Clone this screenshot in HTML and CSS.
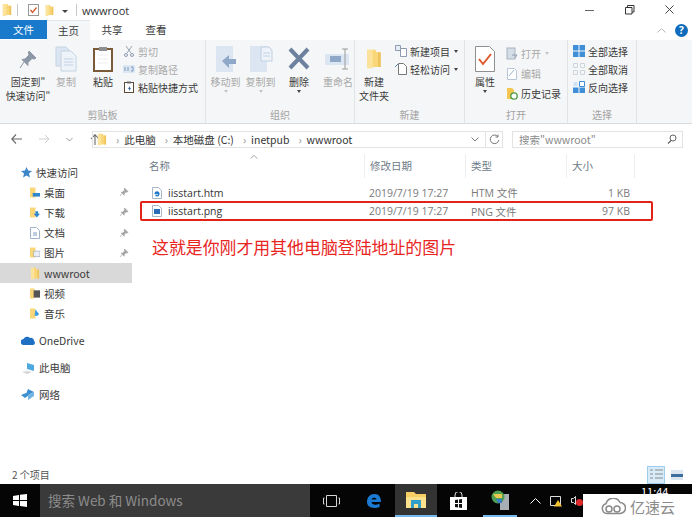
FILE: index.html
```html
<!DOCTYPE html>
<html lang="zh">
<head>
    <meta charset="UTF-8" />
    <title>wwwroot</title>
    <link rel="stylesheet" href="styles.css">
</head>
<body>
    <svg class="defs" width="0" height="0">
        <symbol id="folder" viewBox="0 0 12 16">
            <path d="M1 1h6l1 2h3v11H5l-4 1z" fill="#f9d778"/>
            <path d="M1 1h4v14H1z" fill="#fbe39c"/>
            <path d="M9 3h2v11H9z" fill="#eec25c"/>
        </symbol>
        <symbol id="pin" viewBox="0 0 10 10">
            <path d="M5.5 1L9 4.500l-1 .6-1-.3-1.800 1.800-.1 1.600-3-3 1.600-.1 1.800-1.800-.2-1z M3 6.500L1 9" fill="#a3a3a3" stroke="#a3a3a3" stroke-width=".7"/>
        </symbol>
    </svg>

    <div class="titlebar">
        <svg class="ico" width="10" height="14"><use href="#folder"/></svg>
        <span class="tsep tsep-a"></span>
        <svg class="qa-check" width="11" height="12" viewBox="0 0 11 12"><rect x=".5" y=".5" width="10" height="11" fill="#fff" stroke="#9a9a9a"/><path d="M2.5 6l2 2.500 4-5" fill="none" stroke="#d9572c" stroke-width="1.300"/></svg>
        <svg class="qa-folder" width="9" height="13"><use href="#folder"/></svg>
        <span class="qa-drop"></span>
        <span class="tsep tsep-b"></span>
        <span class="title">wwwroot</span>
        <div class="winbtns">
            <svg width="10" height="10" viewBox="0 0 10 10"><path d="M0 5.500h9" stroke="#666"/></svg>
            <svg width="10" height="10" viewBox="0 0 10 10"><path d="M.5 2.500H7V9H.5zM2.500 2.500V.5H9V7H7" fill="none" stroke="#333"/></svg>
            <svg width="10" height="10" viewBox="0 0 10 10"><path d="M.5.5l8 8M8.500.5l-8 8" stroke="#444"/></svg>
        </div>
    </div>

    <div class="tabs">
        <span class="tab tab-file">文件</span>
        <span class="tab tab-on">主页</span>
        <span class="tab">共享</span>
        <span class="tab">查看</span>
        <div class="tabs-right">
            <svg width="9" height="5" viewBox="0 0 9 5"><path d="M.5 4.500l4-4 4 4" fill="none" stroke="#b5b5b5"/></svg>
            <span class="help">?</span>
        </div>
    </div>

    <div class="ribbon">
        <div class="group g-clip">
            <div class="group-body">
                <div class="big w-pin">
                    <svg class="big-ico" width="22" height="26" viewBox="0 0 22 26"><path d="M12 5l7 7-2 1-2-.5-4 4v3l-6-6 3-.5 4-4-.5-2zM7 16l-4 6" fill="#8b97a5" stroke="#8b97a5"/></svg>
                    <span>固定到"<br>快速访问"</span>
                </div>
                <div class="big w-copy off">
                    <svg class="big-ico" width="22" height="26" viewBox="0 0 22 26"><path d="M1 1h10l4 4v15H1z" fill="#dbe6f2" stroke="#c5d3e2"/><path d="M6 5h10l5 5v15H6z" fill="#eef3f9" stroke="#c5d3e2"/><path d="M9 13h9M9 16h9M9 19h9" stroke="#c2d2e4"/></svg>
                    <span>复制</span>
                </div>
                <div class="big w-paste on">
                    <svg class="big-ico" width="20" height="26" viewBox="0 0 20 26"><rect x="1" y="3" width="18" height="22" fill="#fff" stroke="#7a5a38" stroke-width="2"/><path d="M6 1h8v4H6z" fill="#8d8d8d"/><path d="M5 9h10M5 13h10M5 17h10" stroke="#eee"/></svg>
                    <span>粘贴</span>
                </div>
                <div class="smalls s-clip">
                    <div class="small off">
                        <svg width="12" height="12" viewBox="0 0 12 12"><path d="M3 1l5 7M9 1L4 8" stroke="#9aa5b5" fill="none"/><circle cx="3" cy="10" r="1.500" fill="none" stroke="#8b9ab0"/><circle cx="9" cy="10" r="1.500" fill="none" stroke="#8b9ab0"/></svg>
                        <span>剪切</span>
                    </div>
                    <div class="small off">
                        <svg width="12" height="12" viewBox="0 0 12 12"><rect y="2" width="12" height="8" fill="#dbe6f2"/><path d="M2 4v4M5 4v4M8 4h2v4H8" stroke="#7f9ac0" fill="none"/></svg>
                        <span>复制路径</span>
                    </div>
                    <div class="small">
                        <svg width="12" height="12" viewBox="0 0 12 12"><rect x="1.500" y="1.500" width="9" height="10" fill="#fff" stroke="#5a4a3a"/><path d="M4 .5h4v2H4z" fill="#666"/><path d="M5 8l2-3v2h1l-2 3V8z" fill="#2a5d9c"/></svg>
                        <span>粘贴快捷方式</span>
                    </div>
                </div>
            </div>
            <div class="group-name">剪贴板</div>
        </div>

        <div class="group g-org">
            <div class="group-body">
                <div class="big w-move off">
                    <svg class="big-ico" width="24" height="26" viewBox="0 0 24 26"><path d="M2 0h17v26H2z" fill="#dbe6f2"/><path d="M8 15l7-6v4h7v5h-7v4z" fill="#8fa8c8"/></svg>
                    <span>移动到</span>
                    <i class="caret faint"></i>
                </div>
                <div class="big w-move off">
                    <svg class="big-ico" width="24" height="26" viewBox="0 0 24 26"><path d="M1 0h17v26H1z" fill="#dbe6f2"/><path d="M12 1h8l3 3v11H12z" fill="#eef3f9" stroke="#bfcfe2"/><path d="M14 7h7M14 10h7" stroke="#c2d2e4"/></svg>
                    <span>复制到</span>
                    <i class="caret faint"></i>
                </div>
                <div class="big w-del on">
                    <svg class="big-ico" width="24" height="26" viewBox="0 0 24 26"><path d="M3 3l18 19M21 3L3 22" stroke="#6e82a0" stroke-width="4"/></svg>
                    <span>删除</span>
                    <i class="caret"></i>
                </div>
                <div class="big w-ren off">
                    <svg class="big-ico" width="26" height="26" viewBox="0 0 26 26"><rect y="8" width="24" height="11" fill="#dbe6f2"/><rect x="5" y="10" width="11" height="6" fill="#8fa8c8"/><path d="M17 3h6M20 3v20M17 23h6" stroke="#9a9a9a" fill="none"/></svg>
                    <span>重命名</span>
                </div>
            </div>
            <div class="group-name">组织</div>
        </div>

        <div class="group g-new">
            <div class="group-body">
                <div class="big w-folder on">
                    <svg class="big-ico" width="16" height="26"><use href="#folder"/></svg>
                    <span>新建<br>文件夹</span>
                </div>
                <div class="smalls s-new">
                    <div class="small">
                        <svg width="12" height="12" viewBox="0 0 12 12"><path d="M.5.5h5v5h-5z" fill="#e6edf5" stroke="#8d9cae"/><path d="M5.500 3.500h6v8h-6z" fill="#fff" stroke="#8d9cae"/></svg>
                        <span>新建项目</span><i class="drop"></i>
                    </div>
                    <div class="small">
                        <svg width="12" height="12" viewBox="0 0 12 12"><path d="M3.500.5h5l3 3v8h-8z" fill="#fff" stroke="#777"/><path d="M0 4l3-3" stroke="#5a86b5"/></svg>
                        <span>轻松访问</span><i class="drop"></i>
                    </div>
                </div>
            </div>
            <div class="group-name">新建</div>
        </div>

        <div class="group g-open">
            <div class="group-body">
                <div class="big w-prop on">
                    <svg class="big-ico" width="20" height="26" viewBox="0 0 20 26"><path d="M.5.5h14l5 5v20H.5z" fill="#fff" stroke="#8f8f8f"/><path d="M4 13l4 5 8-10" fill="none" stroke="#e0572a" stroke-width="2"/></svg>
                    <span>属性</span>
                    <i class="caret"></i>
                </div>
                <div class="smalls s-open">
                    <div class="small off">
                        <svg width="12" height="13" viewBox="0 0 12 13"><rect x="1" y="1" width="8" height="11" fill="#d5dde6" stroke="#a8b4c2"/><path d="M6 8h5l-2 3" fill="none" stroke="#8d9cae"/></svg>
                        <span>打开</span><i class="drop faint"></i>
                    </div>
                    <div class="small off">
                        <svg width="12" height="13" viewBox="0 0 12 13"><path d="M1.500 1.500h7l2 2v9h-9z" fill="#fff" stroke="#b9c6d6"/><path d="M3 9l5-6" stroke="#9ab4d2"/></svg>
                        <span>编辑</span>
                    </div>
                    <div class="small">
                        <svg width="12" height="13" viewBox="0 0 12 13"><path d="M1 1h5l2 2v9H1z" fill="#f3c64f"/><circle cx="8" cy="9" r="3.200" fill="#fff" stroke="#4d9a45" stroke-width="1.300"/></svg>
                        <span>历史记录</span>
                    </div>
                </div>
            </div>
            <div class="group-name">打开</div>
        </div>

        <div class="group g-sel">
            <div class="group-body">
                <div class="smalls s-sel">
                    <div class="small">
                        <svg width="12" height="12" viewBox="0 0 12 12"><path d="M0 0h5.500v5.500H0zM6.500 0H12v5.500H6.500zM0 6.500h5.500V12H0zM6.500 6.500H12V12H6.500z" fill="#3f8fd8"/></svg>
                        <span>全部选择</span>
                    </div>
                    <div class="small">
                        <svg width="12" height="12" viewBox="0 0 12 12"><path d="M.5.5h4v4h-4zM7.500.5h4v4h-4zM.5 7.500h4v4h-4zM7.500 7.500h4v4h-4z" fill="none" stroke="#cfd4da"/></svg>
                        <span>全部取消</span>
                    </div>
                    <div class="small">
                        <svg width="12" height="12" viewBox="0 0 12 12"><path d="M0 6.500h5.500V12H0zM6.500 6.500H12V12H6.500z" fill="#3f8fd8"/><path d="M6.500.5h5v5h-5z" fill="#fff" stroke="#3f8fd8"/><path d="M.5 1h4v4h-4z" fill="#cfe3f6"/></svg>
                        <span>反向选择</span>
                    </div>
                </div>
            </div>
            <div class="group-name">选择</div>
        </div>
    </div>

    <div class="navbar">
        <div class="navbtns">
            <svg width="11" height="10" viewBox="0 0 11 10"><path d="M5 .5L.8 5 5 9.500M1 5h10" fill="none" stroke="#6b6b6b" stroke-width="1.100"/></svg>
            <svg width="10" height="10" viewBox="0 0 10 10"><path d="M6 1l4 4-4 4M0 5h9.500" fill="none" stroke="#cfcfcf"/></svg>
            <svg width="7" height="5" viewBox="0 0 7 5"><path d="M.5 1l3 3 3-3" fill="none" stroke="#9a9a9a"/></svg>
            <svg width="10" height="11" viewBox="0 0 10 11"><path d="M1 5L5 .7 9 5M5 1v10" fill="none" stroke="#6b6b6b" stroke-width="1.100"/></svg>
        </div>
        <div class="addr">
            <svg class="addr-folder" width="10" height="13"><use href="#folder"/></svg>
            <span class="crumb">此电脑</span>
            <span class="crumb">本地磁盘 (C:)</span>
            <span class="crumb">inetpub</span>
            <span class="crumb">wwwroot</span>
            <svg class="addr-drop" width="8" height="5" viewBox="0 0 8 5"><path d="M.5.5L4 4 7.500.5" fill="none" stroke="#777"/></svg>
            <span class="refresh">
                <svg width="11" height="11" viewBox="0 0 11 11"><path d="M8.800 2.500a4.300 4.300 0 1 0 1 3.500M9 .5V3H6.500" fill="none" stroke="#777"/></svg>
            </span>
        </div>
        <div class="search">
            <span>搜索"wwwroot"</span>
            <svg width="10" height="10" viewBox="0 0 10 10"><circle cx="6" cy="4" r="3" fill="none" stroke="#666"/><path d="M4 6.500l-3 3" stroke="#666" stroke-width="1.300"/></svg>
        </div>
    </div>

    <div class="main">
        <div class="side">
            <div class="row head">
                <svg width="11" height="11" viewBox="0 0 11 11"><path d="M5.500 0l1.600 3.600 3.900.4-3 2.500.9 3.900-3.400-2-3.400 2 .9-3.900-3-2.500L3.900 3.600z" fill="#3d86c9"/></svg>
                <span>快速访问</span>
            </div>
            <div class="row">
                <svg class="f" width="11" height="13" viewBox="0 0 11 13"><path d="M0 1h6v11H0z" fill="#f9d778"/><path d="M3 7h8v4H3z" fill="#2f86cf"/></svg><span>桌面</span>
                <svg class="pin" width="10" height="10"><use href="#pin"/></svg>
            </div>
            <div class="row">
                <svg class="f" width="11" height="13" viewBox="0 0 11 13"><path d="M0 1h6v11H0z" fill="#f9d778"/><path d="M6 5h3v3h2l-3.500 4L4 8h2z" fill="#2f86cf"/></svg><span>下载</span>
                <svg class="pin" width="10" height="10"><use href="#pin"/></svg>
            </div>
            <div class="row">
                <svg class="f" width="10" height="12" viewBox="0 0 10 12"><path d="M.5.5h6l3 3v8h-9z" fill="#fff" stroke="#9fb4ca"/><path d="M3 6h4M3 8h4" stroke="#7f9ac0"/></svg><span>文档</span>
                <svg class="pin" width="10" height="10"><use href="#pin"/></svg>
            </div>
            <div class="row">
                <svg class="f" width="11" height="13" viewBox="0 0 11 13"><path d="M0 1h6v11H0z" fill="#f9d778"/><path d="M4 5h7v6H4z" fill="#e8eef4" stroke="#8a9aac" stroke-width=".6"/></svg><span>图片</span>
                <svg class="pin" width="10" height="10"><use href="#pin"/></svg>
            </div>
            <div class="row row-on">
                <svg class="f" width="10" height="13"><use href="#folder"/></svg><span>wwwroot</span>
            </div>
            <div class="row">
                <svg class="f" width="11" height="13" viewBox="0 0 11 13"><path d="M0 1h5v11H0z" fill="#f9d778"/><path d="M4 3h7v8H4z" fill="#555"/></svg><span>视频</span>
            </div>
            <div class="row">
                <svg class="f" width="11" height="13" viewBox="0 0 11 13"><path d="M0 1h6v11H0z" fill="#f9d778"/><path d="M6 2l4 5-1.500 2H5z" fill="#3d9be0"/></svg><span>音乐</span>
            </div>
            <div class="row head gap">
                <svg width="14" height="9" viewBox="0 0 14 9"><path d="M3 9a3 3 0 0 1-.5-6A4 4 0 0 1 9 2a3 3 0 0 1 4 3 2.200 2.200 0 0 1-1 4z" fill="#1f6fc4"/></svg>
                <span>OneDrive</span>
            </div>
            <div class="row head gap">
                <svg width="14" height="12" viewBox="0 0 14 12"><path d="M6 1l7 2v6L6 7z" fill="#4fa8e0"/><path d="M1 10l5-1 5 1-5 2z" fill="#d5d5d5"/></svg>
                <span>此电脑</span>
            </div>
            <div class="row head gap">
                <svg width="14" height="12" viewBox="0 0 14 12"><path d="M7 0l6 3-6 3-2-1zM0 6l5-2 3 2-4 3z" fill="#3d8fd0"/><path d="M7 6l6-3v4l-6 4z" fill="#6fb4e4"/></svg>
                <span>网络</span>
            </div>
        </div>

        <div class="files">
            <svg class="sort" width="8" height="4" viewBox="0 0 8 4"><path d="M.5 3.500L4 .5l3.500 3" fill="none" stroke="#aaa"/></svg>
            <div class="cols">
                <span class="c-name">名称</span>
                <span class="c-date">修改日期</span>
                <span class="c-type">类型</span>
                <span class="c-size">大小</span>
            </div>
            <div class="frow">
                <span class="c-name">
                    <svg width="10" height="12" viewBox="0 0 10 12"><path d="M.5.5h6l3 3v8h-9z" fill="#fff" stroke="#a9b8c8"/><path d="M7 6.500H3.200a1.900 1.900 0 1 1 .4 1.600" fill="none" stroke="#1f78c8" stroke-width="1.300"/></svg>
                    iisstart.htm
                </span>
                <span class="c-date">2019/7/19 17:27</span>
                <span class="c-type">HTM 文件</span>
                <span class="c-size">1 KB</span>
            </div>
            <div class="frow">
                <span class="c-name">
                    <svg width="10" height="12" viewBox="0 0 10 12"><path d="M.5.5h6l3 3v8h-9z" fill="#fff" stroke="#a9b8c8"/><rect x="2" y="4" width="6" height="5" fill="#2a6db5"/></svg>
                    iisstart.png
                </span>
                <span class="c-date">2019/7/19 17:27</span>
                <span class="c-type">PNG 文件</span>
                <span class="c-size">97 KB</span>
            </div>
            <div class="mark"></div>
            <div class="note">这就是你刚才用其他电脑登陆地址的图片</div>
        </div>
    </div>

    <div class="status">
        <span>2 个项目</span>
        <div class="views">
            <span class="view view-on">
                <svg width="13" height="13" viewBox="0 0 13 13"><path d="M0 2h3M0 6h3M0 10h3M5 2h8M5 6h8M5 10h8" stroke="#8a8a8a"/></svg>
            </span>
            <span class="view">
                <svg width="12" height="10" viewBox="0 0 12 10"><rect width="12" height="10" fill="#dce6f0"/><path d="M0 4h12v3H0z" fill="#3d6e9c"/></svg>
            </span>
        </div>
    </div>

    <div class="taskbar">
        <span class="start">
            <svg width="14" height="13" viewBox="0 0 14 13"><path d="M0 2l6-1v5H0zM7 .8L14 0v6H7zM0 7h6v5l-6-1zM7 7h7v6l-7-1z" fill="#fff"/></svg>
        </span>
        <span class="tb-search">搜索 Web 和 Windows</span>
        <span class="tb-view">
            <svg width="17" height="12" viewBox="0 0 17 12"><path d="M3.500.5h10v11h-10zM1.500 3h-1v6h1M15.500 3h1v6h-1" fill="none" stroke="#d5d5d5"/></svg>
        </span>
        <span class="tb-app tb-edge">
            <svg width="16" height="16" viewBox="0 0 16 16"><path d="M1 9C1 4 4 1 8.500 1 13 1 15 4.500 15 9H5.500c.3 3 4.500 3.500 8 1.500V14c-5 2-12.500 1-12.500-5zM5.500 6.500h5C10.300 4 6 4 5.500 6.500z" fill="#1a7ad4"/></svg>
        </span>
        <span class="tb-app tb-files">
            <svg width="20" height="17" viewBox="0 0 20 17"><path d="M0 1h8l2 2h10v14H0z" fill="#f5cd62"/><path d="M0 6h20v11H0z" fill="#fbe08d"/><path d="M5 9h10v8h-3v-4H8v4H5z" fill="#2f9fc9"/></svg>
        </span>
        <span class="tb-app tb-store">
            <svg width="17" height="18" viewBox="0 0 17 18"><path d="M5 5V3a3.500 3.500 0 0 1 7 0v2" fill="none" stroke="#ddd"/><path d="M0 5h17v13H0z" fill="#fff"/><path d="M5 8l3-.5V11H5zM9 7.400l3-.5V11H9zM5 12h3v3.500L5 15zM9 12h3v4l-3-.5z" fill="#111"/></svg>
        </span>
        <span class="tb-app tb-iis">
            <svg width="19" height="20" viewBox="0 0 19 20"><rect x="9" y="4" width="9" height="16" fill="#a9b0b5"/><circle cx="7" cy="7" r="6.500" fill="#4f9f52"/><path d="M2 4h9v4H5z" fill="#e9c94f"/><path d="M5 9h6v4H7z" fill="#3a7fc4"/></svg>
        </span>
        <span class="tray">
            <svg width="11" height="6" viewBox="0 0 11 6"><path d="M.5 5.500l5-5 5 5" fill="none" stroke="#fff"/></svg>
            <svg width="14" height="12" viewBox="0 0 14 12"><path d="M1.500 1.500h10v9h-10z" fill="none" stroke="#ddd"/><path d="M9 5l4 6.500H5z" fill="#f4c430"/></svg>
            <svg width="12" height="11" viewBox="0 0 12 11"><path d="M.5 3.500h2l2-2v8l-2-2h-2z" fill="none" stroke="#ddd"/><circle cx="8.500" cy="7.500" r="3.500" fill="#e02b2b"/></svg>
        </span>
        <span class="clock">11:44</span>
    </div>

    <div class="wm">
        <svg width="25" height="17" viewBox="0 0 25 17"><path d="M6 15.500a5 5 0 0 1-1-9.800A7.500 7.500 0 0 1 19 4.500a5.500 5.500 0 0 1 0 11z" fill="none" stroke="#8a8a8a" stroke-width="1.500"/><circle cx="8" cy="11" r="3" fill="none" stroke="#8a8a8a" stroke-width="1.500"/><circle cx="16" cy="11" r="3" fill="none" stroke="#8a8a8a" stroke-width="1.500"/></svg>
        <span>亿速云</span>
    </div>
</body>
</html>
```

FILE: styles.css
```css
html, body {
    margin: 0;
    padding: 0;
}

body {
    position: relative;
    width: 692px;
    height: 519px;
    overflow: hidden;
    background: #fff;
    font-family: "Noto Sans CJK SC", "Open Sans", sans-serif;
    font-size: 10px;
    color: #3a3a3a;
}

svg {
    display: block;
    flex: none;
}

.defs {
    position: absolute;
}

/* title bar */
.titlebar {
    display: flex;
    align-items: center;
    height: 20px;
    padding-left: 2px;
}

.tsep {
    width: 1px;
    height: 12px;
    background: #c8c8c8;
}

.tsep-a {
    margin-left: 5px;
}

.qa-check {
    margin-left: 10px;
}

.qa-folder {
    margin-left: 6px;
}

.qa-drop {
    width: 0;
    height: 0;
    margin: 2px 0 0 8px;
    border: 3px solid transparent;
    border-top: 3px solid #444;
    border-bottom: 0;
}

.tsep-b {
    margin-left: 8px;
}

.title {
    margin-left: 5px;
    font-family: "Open Sans", sans-serif;
    font-size: 11px;
    color: #333;
}

.winbtns {
    display: flex;
    gap: 30px;
    margin-left: auto;
    padding-right: 17px;
}

/* tabs */
.tabs {
    display: flex;
    height: 20px;
}

.tab {
    width: 44px;
    line-height: 19px;
    text-align: center;
    font-size: 10.5px;
}

.tab-file {
    width: 47px;
    height: 19px;
    background: #1979ca;
    color: #fff;
}

.tab-on {
    width: 43px;
    background: #f5f6f7;
    border-top: 1px solid #e4e5e6;
    box-sizing: border-box;
}

.tabs-right {
    display: flex;
    align-items: center;
    gap: 9px;
    margin-left: auto;
    padding-right: 4px;
}

.help {
    width: 13px;
    height: 13px;
    border-radius: 50%;
    background: #0f6cbd;
    color: #fff;
    font: bold 10px/13px "Open Sans", sans-serif;
    text-align: center;
}

/* ribbon */
.ribbon {
    display: flex;
    height: 83px;
    background: #f5f6f7;
    border-bottom: 1px solid #dadbdc;
}

.group {
    display: flex;
    flex-direction: column;
    box-sizing: border-box;
    border-right: 1px solid #e2e3e4;
}

.g-clip {
    width: 206px;
}

.g-org {
    width: 149px;
}

.g-new {
    width: 110px;
}

.g-open {
    width: 103px;
}

.g-sel {
    width: 69px;
}

.group-body {
    display: flex;
    flex: 1;
}

.group-name {
    height: 15px;
    line-height: 13px;
    text-align: center;
    color: #a3a3a3;
}

.big {
    display: flex;
    flex-direction: column;
    align-items: center;
    padding-top: 6px;
    line-height: 14px;
    text-align: center;
    flex: none;
}

.big-ico {
    height: 26px;
    margin-bottom: 3px;
}

.big.off {
    color: #a9a9a9;
}

.w-pin {
    width: 56px;
}

.w-copy {
    width: 20px;
}

.w-paste {
    width: 24px;
    margin-left: 15px;
}

.w-move {
    width: 33px;
    margin-left: 2px;
}

.w-move:first-child {
    margin-left: 3px;
}

.w-del {
    width: 26px;
    margin-left: 9px;
}

.w-ren {
    width: 32px;
    margin-left: 10px;
}

.w-folder {
    width: 38px;
}

.w-prop {
    width: 40px;
}

.caret {
    width: 0;
    height: 0;
    margin-top: 1px;
    border: 2.5px solid transparent;
    border-top: 3px solid #444;
    border-bottom: 0;
}

.caret.faint {
    border-top-color: #c5c5c5;
}

.smalls {
    display: flex;
    flex-direction: column;
    padding-top: 2px;
}

.small {
    display: flex;
    align-items: center;
    gap: 3px;
    height: 18px;
    white-space: nowrap;
}

.small.off {
    color: #a9a9a9;
}

.drop {
    width: 0;
    height: 0;
    margin-left: 1px;
    border: 2.5px solid transparent;
    border-top: 3px solid #444;
    border-bottom: 0;
}

.drop.faint {
    border-top-color: #c5c5c5;
}

.s-clip {
    margin-left: 8px;
}

.s-new {
    margin-left: 2px;
}

.s-open {
    margin-left: 1px;
    padding-top: 3px;
}

.s-open .small {
    height: 20px;
}

.s-sel {
    margin-left: 5px;
}

/* address bar */
.navbar {
    display: flex;
    align-items: center;
    height: 30px;
    padding-left: 11px;
}

.navbtns {
    display: flex;
    align-items: center;
    gap: 17px;
    width: 81px;
}

.addr {
    display: flex;
    align-items: center;
    box-sizing: border-box;
    width: 411px;
    height: 17px;
    padding-left: 4px;
    border: 1px solid #e3e3e3;
}

.crumb {
    margin-left: 9px;
    padding-left: 9px;
    font-size: 10.5px;
    color: #333;
    white-space: nowrap;
}

.crumb::before {
    content: "›";
    margin: 0 5px 0 -9px;
    color: #888;
}

.addr-drop {
    margin-left: auto;
    margin-right: 6px;
}

.refresh {
    display: flex;
    align-items: center;
    justify-content: center;
    width: 16px;
    height: 15px;
    border-left: 1px solid #e3e3e3;
}

.search {
    display: flex;
    align-items: center;
    justify-content: space-between;
    box-sizing: border-box;
    width: 171px;
    height: 17px;
    margin-left: 9px;
    padding: 0 5px 0 6px;
    border: 1px solid #e3e3e3;
    color: #8a8a8a;
    font-size: 10.5px;
}

/* main panes */
.main {
    display: flex;
    height: 311px;
}

.side {
    width: 133px;
    padding-top: 8px;
    flex: none;
}

.row {
    display: flex;
    align-items: center;
    gap: 4px;
    width: 132px;
    box-sizing: border-box;
    height: 20.2px;
    padding-left: 30px;
    font-size: 10.5px;
}

.row .f {
    width: 10px;
}

.row.head {
    padding-left: 21px;
}

.row.gap {
    margin-top: 7px;
}

.row-on {
    background: #d9d9d9;
}

.row .pin {
    margin-left: auto;
    margin-right: 3px;
}

.files {
    position: relative;
    flex: 1;
}

.sort {
    position: absolute;
    left: 117px;
    top: 1px;
}

.cols {
    display: flex;
    height: 24px;
    margin-bottom: 5px;
    align-items: center;
    color: #6d7a88;
    font-size: 10.5px;
}

.cols span {
    box-sizing: border-box;
    height: 24px;
    line-height: 24px;
    border-right: 1px solid #eceef0;
}

.frow {
    display: flex;
    height: 19px;
    align-items: center;
    font-size: 10.5px;
    font-family: "Open Sans", "Noto Sans CJK SC", sans-serif;
    color: #7a7a7a;
}

.frow + .frow {
    margin-top: -0.5px;
}

.c-name {
    display: flex;
    align-items: center;
    gap: 6px;
    box-sizing: border-box;
    width: 232px;
    padding-left: 19px;
    color: #333;
}

.cols .c-name {
    padding-left: 16px;
    color: #6d7a88;
}

.c-date {
    box-sizing: border-box;
    width: 101px;
    padding-left: 4px;
}

.cols .c-date {
    padding-left: 5px;
}

.c-type {
    box-sizing: border-box;
    width: 101px;
    padding-left: 5px;
}

.c-size {
    box-sizing: border-box;
    width: 68px;
    padding-left: 5px;
}

.frow .c-size {
    padding-right: 5px;
    padding-left: 0;
    text-align: right;
}

/* red mark drawn on top of the list */
.mark {
    position: absolute;
    left: 7px;
    top: 47px;
    width: 509px;
    height: 16px;
    border: 2px solid #e2231a;
    border-radius: 2px;
}

.note {
    position: absolute;
    left: 19px;
    top: 80px;
    font-size: 16.9px;
    line-height: 26px;
    color: #e8251f;
    white-space: nowrap;
}

/* status bar */
.status {
    display: flex;
    align-items: center;
    justify-content: space-between;
    height: 19px;
    padding: 0 6px 0 12px;
    color: #555;
}

.views {
    display: flex;
    align-items: center;
    gap: 3px;
}

.view {
    display: flex;
    align-items: center;
    justify-content: center;
    width: 18px;
    height: 18px;
}

.view-on {
    box-sizing: border-box;
    background: #d8ebf9;
    border: 1px solid #9fcdee;
}

/* taskbar */
.taskbar {
    display: flex;
    align-items: center;
    height: 33px;
    background: #050505;
}

.start {
    display: flex;
    justify-content: center;
    width: 40px;
}

.tb-search {
    box-sizing: border-box;
    width: 270px;
    height: 33px;
    padding-left: 8px;
    line-height: 33px;
    background: #3a3a3a;
    color: #8c8c8c;
    font-size: 13.5px;
}

.tb-view {
    display: flex;
    justify-content: center;
    width: 43px;
}

.tb-app {
    display: flex;
    align-items: center;
    justify-content: center;
    box-sizing: border-box;
    width: 42px;
    height: 33px;
}

.tb-files {
    background: #333;
    border-bottom: 2px solid #76b9ed;
}

.tb-iis {
    width: 34px;
    margin-left: 4px;
    border-bottom: 2px solid #76b9ed;
}

.tray {
    display: flex;
    align-items: center;
    gap: 8px;
    margin-left: 13px;
}

.clock {
    margin-left: 58px;
    align-self: flex-start;
    color: #fff;
    font-size: 11px;
    line-height: 14px;
}

/* watermark over the corner */
.wm {
    position: absolute;
    right: 0;
    bottom: 0;
    display: flex;
    align-items: center;
    gap: 4px;
    box-sizing: border-box;
    width: 109px;
    height: 25px;
    padding-left: 18px;
    background: #fff;
    color: #8a8a8a;
    font-size: 15px;
}
```
